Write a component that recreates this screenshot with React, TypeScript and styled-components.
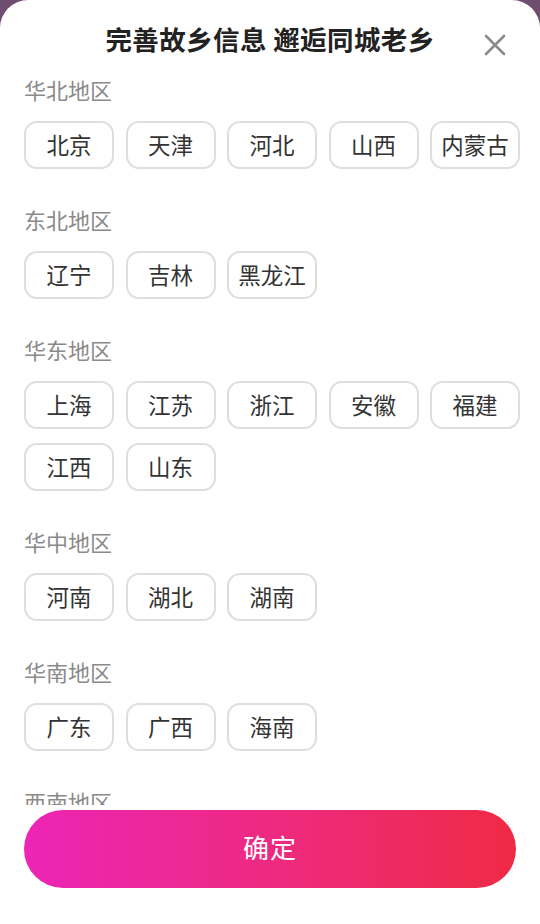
import React from 'react';
import styled, { createGlobalStyle } from 'styled-components';

const GlobalStyle = createGlobalStyle`
	html, body {
		margin: 0;
		padding: 0;
		background: #6e4e70;
	}
	body {
		font-family: "Noto Sans CJK SC", "Noto Sans", sans-serif;
	}
`;

const Sheet = styled.div`
	width: 540px;
	height: 924px;
	background: #ffffff;
	border-radius: 28px 28px 0 0;
	display: flex;
	flex-direction: column;
	overflow: hidden;
`;

const Header = styled.div`
	position: relative;
	height: 77px;
	flex-shrink: 0;
	display: flex;
	justify-content: center;
	padding-top: 21px;
	box-sizing: border-box;
`;

const Title = styled.h1`
	margin: 0;
	font-size: 26.5px;
	line-height: 36px;
	font-weight: 700;
	color: #222222;
	letter-spacing: 0.4px;
`;

const CloseButton = styled.button`
	position: absolute;
	top: 33px;
	right: 33px;
	width: 24px;
	height: 24px;
	padding: 0;
	border: none;
	background: none;
	display: flex;
	align-items: center;
	justify-content: center;
`;

const Body = styled.div`
	flex: 1;
	overflow: hidden;
	padding: 0 20px 0 24px;
`;

const Section = styled.section`
	margin-bottom: 38px;
`;

const RegionLabel = styled.div`
	font-size: 22px;
	line-height: 24px;
	color: #8a8a8a;
	margin-bottom: 20px;
`;

const ChipGrid = styled.div`
	display: grid;
	grid-template-columns: repeat(5, 90px);
	column-gap: 11.5px;
	row-gap: 14px;
`;

const Chip = styled.button<{ $selected?: boolean }>`
	height: 48px;
	box-sizing: border-box;
	border: 2px solid ${(p) => (p.$selected ? '#ec2a7a' : '#dedede')};
	border-radius: 13px;
	background: #ffffff;
	color: ${(p) => (p.$selected ? '#ec2a7a' : '#333333')};
	font-family: inherit;
	font-size: 22.5px;
	line-height: 28px;
	padding: 0 0 3px;
	white-space: nowrap;
`;

const Footer = styled.div`
	flex-shrink: 0;
	height: 119px;
	background: #ffffff;
	padding: 5px 24px 0;
	box-sizing: border-box;
`;

const ConfirmButton = styled.button`
	width: 100%;
	height: 78px;
	border: none;
	border-radius: 39px;
	background: linear-gradient(90deg, #ec25b6 0%, #ee2a76 60%, #ef2a45 100%);
	color: #ffffff;
	font-family: inherit;
	font-size: 26px;
	line-height: 32px;
	letter-spacing: 1px;
	padding: 0 0 4px;
`;

const regions: { name: string; provinces: string[] }[] = [
	{ name: '华北地区', provinces: ['北京', '天津', '河北', '山西', '内蒙古'] },
	{ name: '东北地区', provinces: ['辽宁', '吉林', '黑龙江'] },
	{ name: '华东地区', provinces: ['上海', '江苏', '浙江', '安徽', '福建', '江西', '山东'] },
	{ name: '华中地区', provinces: ['河南', '湖北', '湖南'] },
	{ name: '华南地区', provinces: ['广东', '广西', '海南'] },
	{ name: '西南地区', provinces: ['重庆', '四川', '贵州', '云南', '西藏'] },
];

export default function App() {
	return (
		<>
			<GlobalStyle />
			<Sheet>
				<Header>
					<Title>完善故乡信息 邂逅同城老乡</Title>
					<CloseButton aria-label="关闭">
						<svg width="22" height="22" viewBox="0 0 22 22">
							<path d="M2 2 L20 20 M20 2 L2 20" stroke="#8a8a8a" strokeWidth="2.6" strokeLinecap="round" />
						</svg>
					</CloseButton>
				</Header>
				<Body>
					{regions.map((r) => (
						<Section key={r.name}>
							<RegionLabel>{r.name}</RegionLabel>
							<ChipGrid>
								{r.provinces.map((p) => (
									<Chip key={p}>{p}</Chip>
								))}
							</ChipGrid>
						</Section>
					))}
				</Body>
				<Footer>
					<ConfirmButton>确定</ConfirmButton>
				</Footer>
			</Sheet>
		</>
	);
}
